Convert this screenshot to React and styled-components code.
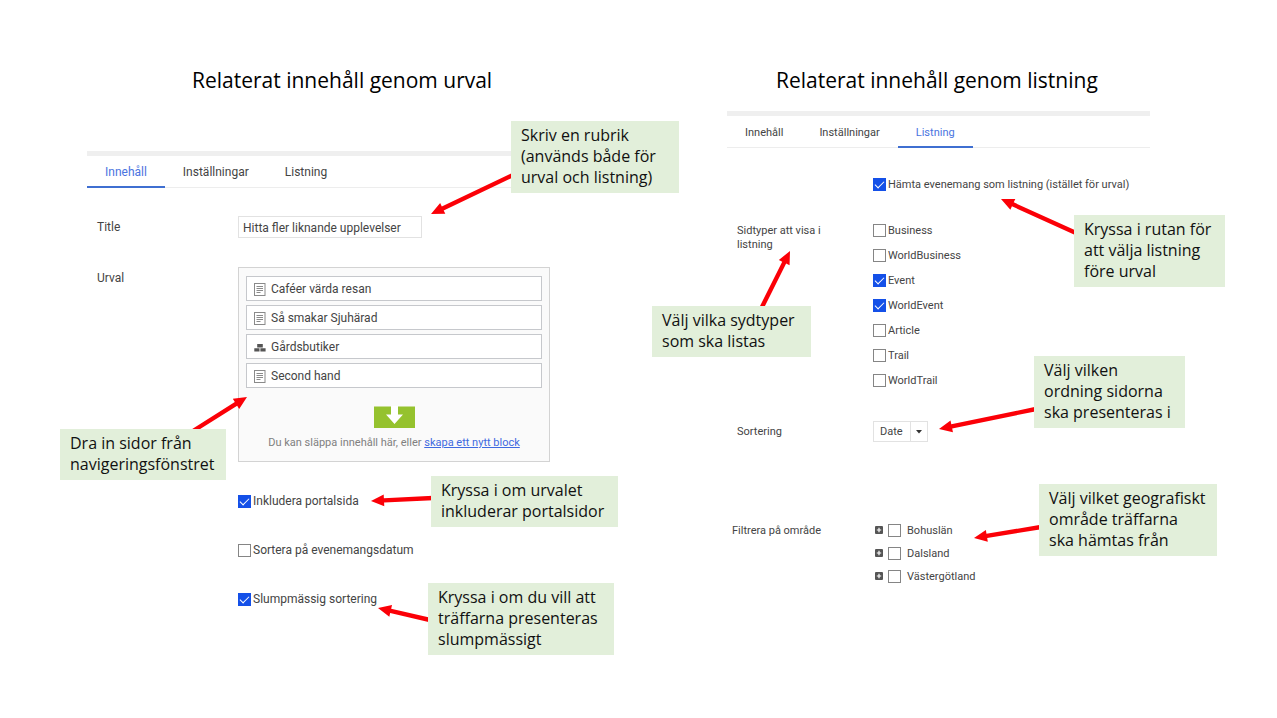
import styled, { createGlobalStyle } from "styled-components";

const listItems = [
  { text: "Caféer värda resan", icon: "page" },
  { text: "Så smakar Sjuhärad", icon: "page" },
  { text: "Gårdsbutiker", icon: "block" },
  { text: "Second hand", icon: "page" },
];

const pageTypes = [
  { name: "Business" },
  { name: "WorldBusiness" },
  { name: "Event", checked: true },
  { name: "WorldEvent", checked: true },
  { name: "Article" },
  { name: "Trail" },
  { name: "WorldTrail" },
];

const regions = ["Bohuslän", "Dalsland", "Västergötland"];

// positions are relative to the section that the note belongs to
const selectionNotes = [
  { x: 424, y: 57, width: 168, text: "Skriv en rubrik\n(används både för\nurval och listning)" },
  { x: -27, y: 365, width: 166, text: "Dra in sidor från\nnavigeringsfönstret" },
  { x: 344, y: 412, width: 187, text: "Kryssa i om urvalet\ninkluderar portalsidor" },
  { x: 341, y: 519, width: 186, text: "Kryssa i om du vill att\nträffarna presenteras\nslumpmässigt" },
];

const selectionArrows = [
  { from: [426, 111], to: [344, 150] },
  { from: [106, 367], to: [160, 333] },
  { from: [346, 434], to: [284, 437] },
  { from: [343, 556], to: [291, 544] },
];

const listingNotes = [
  { x: 347, y: 151, width: 151, text: "Kryssa i rutan för\natt välja listning\nföre urval" },
  { x: -75, y: 242, width: 159, text: "Välj vilka sydtyper\nsom ska listas" },
  { x: 307, y: 292, width: 151, text: "Välj vilken\nordning sidorna\nska presenteras i" },
  { x: 312, y: 420, width: 178, text: "Välj vilket geografiskt\nområde träffarna\nska hämtas från" },
];

const listingArrows = [
  { from: [349, 169], to: [274, 135] },
  { from: [34, 245], to: [63, 187] },
  { from: [309, 345], to: [212, 365] },
  { from: [314, 463], to: [247, 474] },
];

function Arrow({ from, to }) {
  const dx = from[0] - to[0];
  const dy = from[1] - to[1];
  const length = Math.hypot(dx, dy);
  const angle = (Math.atan2(dy, dx) * 180) / Math.PI;
  return (
    <path
      d={`M0 0 L13 -6 V-2.2 H${length} V2.2 H13 V6 Z`}
      transform={`translate(${to[0]} ${to[1]}) rotate(${angle})`}
      fill="#fb0007"
    />
  );
}

function Notes({ notes, arrows }) {
  return (
    <>
      <ArrowLayer aria-hidden="true">
        {arrows.map((arrow) => (
          <Arrow key={arrow.to.join()} {...arrow} />
        ))}
      </ArrowLayer>
      {notes.map((note) => (
        <Note key={note.text} $x={note.x} $y={note.y} $width={note.width}>
          {note.text}
        </Note>
      ))}
    </>
  );
}

function TabBar({ active }) {
  return (
    <Tabs>
      {["Innehåll", "Inställningar", "Listning"].map((tab) => (
        <Tab key={tab} type="button" $active={tab === active}>
          {tab}
        </Tab>
      ))}
    </Tabs>
  );
}

function PageIcon() {
  return (
    <svg width="12" height="13" viewBox="0 0 12 13" fill="none" stroke="#8a8a8a">
      <rect x="0.5" y="0.5" width="10.5" height="12" />
      <path d="M2.5 3.5h6.5M2.5 5.5h6.5M2.5 7.5h6.5M2.5 9.5h4" />
    </svg>
  );
}

function BlockIcon() {
  return (
    <svg width="12" height="13" viewBox="0 0 12 13" fill="#555">
      <path d="M3.2 3h5.6v3.4H3.2zM0.3 7.2h5.2v3.3H0.3zM6.4 7.2h5.2v3.3H6.4z" />
    </svg>
  );
}

function DropIcon() {
  return (
    <svg width="41" height="22" viewBox="0 0 41 22">
      <path d="M0 0.500h41v21.500H0z" fill="#95c22e" />
      <path d="M17 0h7v8.500h5L20.500 18 12 8.500h5z" fill="#fff" />
    </svg>
  );
}

function PlusIcon() {
  return (
    <svg width="8" height="8" viewBox="0 0 8 8">
      <rect width="8" height="8" rx="1" fill="#555" />
      <path d="M4 1.800v4.400M1.800 4h4.400" stroke="#fff" strokeWidth="1.200" />
    </svg>
  );
}

export default function App() {
  return (
    <>
      <GlobalStyle />
      <Page>
        <Section $size={12}>
          <Heading $indent={105} $space={55}>
            Relaterat innehåll genom urval
          </Heading>
          <TabBar active="Innehåll" />
          <Fields $space={28} $gap={29}>
            <Row>
              <FieldLabel htmlFor="title">Title</FieldLabel>
              <TextInput
                id="title"
                type="text"
                defaultValue="Hitta fler liknande upplevelser"
              />
            </Row>
            <Row>
              <FieldLabel as="span">Urval</FieldLabel>
              <DropArea>
                <ItemList>
                  {listItems.map((item) => (
                    <Item key={item.text}>
                      {item.icon === "page" ? <PageIcon /> : <BlockIcon />}
                      {item.text}
                    </Item>
                  ))}
                </ItemList>
                <DropIcon />
                <DropText>
                  Du kan släppa innehåll här, eller{" "}
                  <DropLink href="#block">skapa ett nytt block</DropLink>
                </DropText>
              </DropArea>
            </Row>
            <Row>
              <CheckLabel>
                <Checkbox defaultChecked />
                Inkludera portalsida
              </CheckLabel>
            </Row>
            <Row>
              <CheckLabel>
                <Checkbox />
                Sortera på evenemangsdatum
              </CheckLabel>
            </Row>
            <Row>
              <CheckLabel>
                <Checkbox defaultChecked />
                Slumpmässig sortering
              </CheckLabel>
            </Row>
          </Fields>
          <Notes notes={selectionNotes} arrows={selectionArrows} />
        </Section>

        <Section $size={11}>
          <Heading $indent={49} $space={15}>
            Relaterat innehåll genom listning
          </Heading>
          <TabBar active="Listning" />
          <Fields $space={26} $gap={26}>
            <Row $column={136}>
              <CheckLabel>
                <Checkbox defaultChecked />
                Hämta evenemang som listning (istället för urval)
              </CheckLabel>
            </Row>
            <Row $column={136}>
              <FieldLabel as="span">Sidtyper att visa i listning</FieldLabel>
              <CheckList $gap={5}>
                {pageTypes.map((type) => (
                  <CheckLabel key={type.name}>
                    <Checkbox defaultChecked={type.checked} />
                    {type.name}
                  </CheckLabel>
                ))}
              </CheckList>
            </Row>
          </Fields>
          <Fields $space={31}>
            <Row $column={136}>
              <FieldLabel htmlFor="sort">Sortering</FieldLabel>
              <SelectBox>
                <Select id="sort" defaultValue="Date">
                  <option>Date</option>
                </Select>
                <Caret>
                  <svg width="6" height="4" viewBox="0 0 6 4">
                    <path d="M0 0h6L3 3.500z" fill="#333" />
                  </svg>
                </Caret>
              </SelectBox>
            </Row>
          </Fields>
          <Fields $space={78} $indent={5}>
            <Row>
              <FieldLabel as="span">Filtrera på område</FieldLabel>
              <CheckList $gap={3}>
                {regions.map((region) => (
                  <TreeRow key={region}>
                    <ExpandButton type="button" aria-label={`Visa ${region}`}>
                      <PlusIcon />
                    </ExpandButton>
                    <CheckLabel $gap={6}>
                      <Checkbox />
                      {region}
                    </CheckLabel>
                  </TreeRow>
                ))}
              </CheckList>
            </Row>
          </Fields>
          <Notes notes={listingNotes} arrows={listingArrows} />
        </Section>
      </Page>
    </>
  );
}

const GlobalStyle = createGlobalStyle`
  * {
    box-sizing: border-box;
  }

  body {
    margin: 0;
    background: #fff;
    color: #444;
    font-family: Roboto, sans-serif;
  }

  button,
  input,
  select {
    font: inherit;
    color: inherit;
  }
`;

const Page = styled.main`
  display: grid;
  grid-template-columns: 463fr 423fr;
  column-gap: 177px;
  padding: 64px 127px 64px 87px;
`;

const Section = styled.section`
  position: relative;
  min-width: 0;
  font-size: ${(props) => props.$size}px;
`;

const Heading = styled.h2`
  margin: 0 0 ${(props) => props.$space}px;
  padding-left: ${(props) => props.$indent}px;
  color: #000;
  font-family: "Open Sans", sans-serif;
  font-size: 21px;
  font-weight: 400;
  line-height: 32px;
  white-space: nowrap;
`;

const Tabs = styled.nav`
  display: flex;
  height: 37px;
  border-top: 5px solid #efefef;
  border-bottom: 1px solid #ededed;
`;

const Tab = styled.button`
  height: 32px;
  padding: 2px 18px 0;
  border: 0;
  border-bottom: 2px solid ${(props) => (props.$active ? "#3f6fd1" : "transparent")};
  background: none;
  color: ${(props) => (props.$active ? "#4a74e0" : "inherit")};
`;

const Fields = styled.div`
  display: flex;
  flex-direction: column;
  gap: ${(props) => props.$gap || 0}px;
  margin-top: ${(props) => props.$space}px;
  padding-left: ${(props) => props.$indent || 10}px;
`;

const Row = styled.div`
  display: grid;
  grid-template-columns: ${(props) => props.$column || 141}px 1fr;
  justify-items: start;

  > :only-child {
    grid-column: 2;
  }
`;

const FieldLabel = styled.label`
  max-width: 100px;
  padding-top: 4px;
  line-height: 14px;
`;

const TextInput = styled.input`
  width: 184px;
  height: 22px;
  padding: 1px 4px 0;
  border: 1px solid #e2e2e2;
  background: #fff;
`;

const DropArea = styled.div`
  display: flex;
  flex-direction: column;
  align-items: center;
  width: 100%;
  padding: 8px 7px 9px;
  border: 1px solid #d3d3d3;
  background: #fafafa;
`;

const ItemList = styled.ul`
  display: flex;
  flex-direction: column;
  gap: 4px;
  width: 100%;
  margin: 0 0 18px;
  padding: 0;
  list-style: none;
`;

const Item = styled.li`
  display: flex;
  align-items: center;
  gap: 5px;
  height: 25px;
  padding: 1px 0 0 7px;
  border: 1px solid #c6c8cc;
  background: #fff;
`;

const DropText = styled.p`
  margin: 6px 0 0;
  color: #808080;
  font-size: 11px;
  line-height: 18px;
`;

const DropLink = styled.a`
  color: #3f6ae0;
`;

const CheckList = styled.div`
  display: flex;
  flex-direction: column;
  gap: ${(props) => props.$gap}px;
`;

const CheckLabel = styled.label`
  display: flex;
  align-items: center;
  gap: ${(props) => props.$gap || 2}px;
  height: 20px;
  white-space: nowrap;
`;

const Checkbox = styled.input.attrs({ type: "checkbox" })`
  appearance: none;
  display: grid;
  place-items: center;
  width: 13px;
  height: 13px;
  margin: 0;
  border: 1px solid #858585;
  background: #fff;

  &:checked {
    border-color: #1450e8;
    background: #1450e8;
  }

  &:checked::after {
    content: "";
    width: 8px;
    height: 4px;
    margin-bottom: 2px;
    border: solid #fff;
    border-width: 0 0 1px 1px;
    transform: rotate(-45deg);
  }
`;

const TreeRow = styled.div`
  display: flex;
  align-items: center;
  gap: 5px;
  padding-left: 2px;
`;

const ExpandButton = styled.button`
  display: flex;
  padding: 0;
  border: 0;
  background: none;
`;

const SelectBox = styled.div`
  position: relative;
`;

const Select = styled.select`
  appearance: none;
  width: 55px;
  height: 21px;
  padding: 0 18px 0 6px;
  border: 1px solid #e2e2e2;
  border-radius: 0;
  background: #fff;
`;

const Caret = styled.span`
  position: absolute;
  top: 1px;
  right: 1px;
  bottom: 1px;
  display: flex;
  align-items: center;
  justify-content: center;
  width: 17px;
  border-left: 1px solid #e2e2e2;
  pointer-events: none;
`;

const ArrowLayer = styled.svg`
  position: absolute;
  top: 0;
  left: 0;
  width: 100%;
  height: 100%;
  overflow: visible;
  pointer-events: none;
`;

const Note = styled.p`
  position: absolute;
  top: ${(props) => props.$y}px;
  left: ${(props) => props.$x}px;
  width: ${(props) => props.$width}px;
  margin: 0;
  padding: 4px 0 5px 10px;
  background: #e2efda;
  color: #111;
  font-family: "Open Sans", sans-serif;
  font-size: 16px;
  line-height: 21px;
  white-space: pre;
`;
